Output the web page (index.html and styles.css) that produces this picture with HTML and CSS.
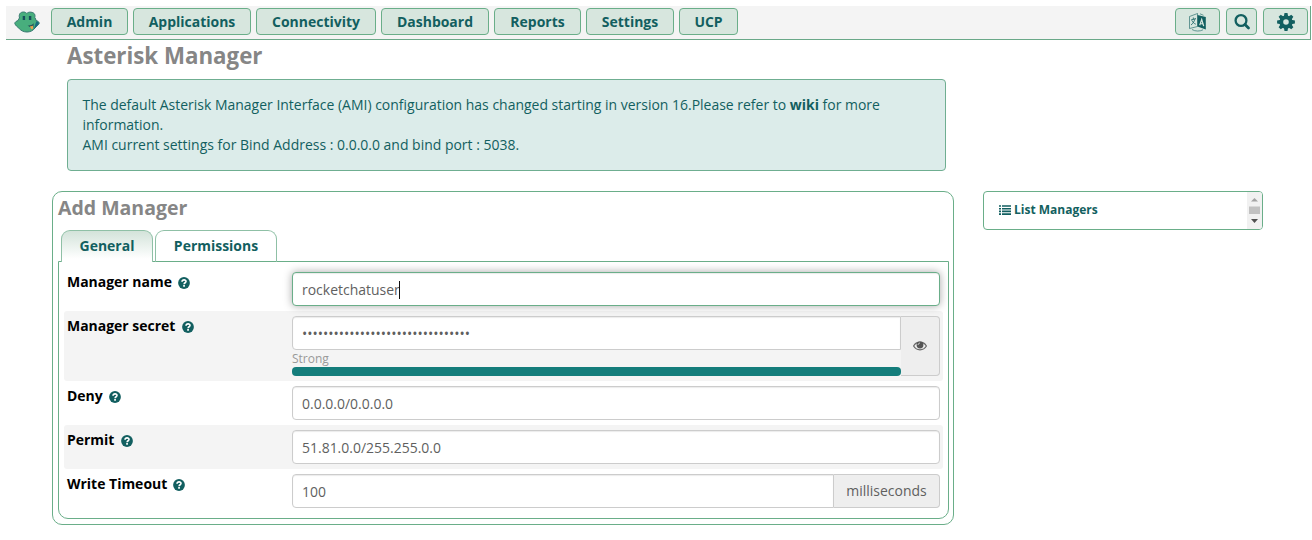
FILE: index.html
```html
<!DOCTYPE html>
<html lang="en">
<head>
<meta charset="utf-8">
<title>Asterisk Manager</title>
<link rel="stylesheet" href="styles.css">
</head>
<body>
<svg width="0" height="0" class="defs">
  <symbol id="help" viewBox="0 0 12 12"><circle cx="6" cy="6" r="5.9" fill="#125f60"/><path d="M4 4.700C4.200 2.300 8.200 2.400 8 4.500 7.900 5.800 6.100 5.700 6.100 7.200" fill="none" stroke="#fff" stroke-width="1.600"/><path d="M5.200 8.100h1.700v1.600H5.200z" fill="#fff"/></symbol>
</svg>
<header class="topbar">
  <svg class="logo" viewBox="0 0 26 22">
    <path d="M5.500 7 C4.500 3 6.500 1 9.500 1 C11 1 12 1.700 12.800 2.500 C14 1.200 15.500 1 17 1.200 C20.500 1.500 21.500 4 20.800 6.500 C21.500 7.500 21.900 8.500 22 9.500 C24 10 25.300 11 25.200 12.500 C24 14.500 22.500 15.200 21 17 C19 19.800 16 21 13 21 C9.500 21 7 19.500 5.200 17.500 C3.500 16 1.500 14.500 .8 12.500 C.8 11 2.500 10 4.200 9.500 C4.400 8.500 4.800 7.700 5.500 7 Z" fill="#48ae7d" stroke="#35776f" stroke-width="1"/>
    <path d="M22.500 10.300 C24 10.400 25 11.400 24.800 12.500 C24 14.300 22.500 15 21 17 C20.500 17.600 20 18 19.500 18.400 C21 16 21 13 22.500 10.300 Z" fill="#176c80"/>
    <path d="M9.900 5V9M16.100 5V9" stroke="#174f5c" stroke-width="2.400"/>
    <path d="M13.500 14.500C16 14.800 18 14 19.800 12.300L19.300 16.500C17 16.800 15.200 16 14.200 14.800Z" fill="#28525a"/>
    <path d="M15.800 15.600L19 14.700V17.800L17.400 18.200Z" fill="#e4a451"/>
  </svg>
  <nav class="menu">
    <a class="btn w-admin">Admin</a><a class="btn w-apps">Applications</a><a class="btn w-conn">Connectivity</a><a class="btn w-dash">Dashboard</a><a class="btn w-rep">Reports</a><a class="btn w-set">Settings</a><a class="btn w-ucp">UCP</a>
  </nav>
  <div class="tools">
    <a class="btn w-lang"><svg width="20" height="20" viewBox="0 0 20 20" fill="none" stroke="#125f60"><path d="M1.500 4.500L9.500 1.500v13l-8 2z" stroke-width=".6"/><path d="M9.500 3l8.300 2v12.500l-8.300-3z" fill="#125f60" stroke="none"/><path d="M3 8l5-1.500M5.300 5.500v2M7 7c-.8 2.500-2 4.500-4 6M4 8.500c1 2 2 3 3.800 3.700" stroke-width=".8"/><path d="M11.700 13.200l2-5.700 2 6.700M12.300 11.500l2.700.5" stroke="#d7e6de" stroke-width="1.200"/><path d="M4 17.500c3 2 8 2 11 .3M12 1.800l3.500 1.500" stroke-width=".6"/></svg></a>
    <a class="btn w-search"><svg width="18" height="18" viewBox="0 0 18 18" fill="none" stroke="#125f60"><circle cx="8" cy="7.500" r="5.400" stroke-width="2.300"/><path d="M12 11.500l3.500 3.500" stroke-width="2.800" stroke-linecap="round"/></svg></a>
    <a class="btn w-gear"><svg width="18" height="18" viewBox="-9 -9 18 18"><g fill="#125f60"><path id="tooth" d="M-1.500-8.900h3l.8 4h-4.600z"/><use href="#tooth" transform="rotate(45)"/><use href="#tooth" transform="rotate(90)"/><use href="#tooth" transform="rotate(135)"/><use href="#tooth" transform="rotate(180)"/><use href="#tooth" transform="rotate(225)"/><use href="#tooth" transform="rotate(270)"/><use href="#tooth" transform="rotate(315)"/></g><circle r="4.700" fill="none" stroke="#125f60" stroke-width="3.800"/></svg></a>
  </div>
</header>
<main class="page">
  <section class="main-col">
    <h1>Asterisk Manager</h1>
    <div class="notice">The default Asterisk Manager Interface (AMI) configuration has changed starting in version 16.Please refer to <b>wiki</b> for more<br>information.<br>AMI current settings for Bind Address : 0.0.0.0 and bind port : 5038.</div>
    <div class="panel">
      <h2>Add Manager</h2>
      <div class="tabs"><a class="tab active">General</a><a class="tab perm">Permissions</a></div>
      <form class="fields">
        <div class="row"><label>Manager name <svg class="help"><use href="#help"/></svg></label><div class="input focus">rocketchatuser<i class="caret"></i></div></div>
        <div class="row shade secret"><label>Manager secret <svg class="help"><use href="#help"/></svg></label>
          <div class="group"><div class="stack"><div class="input left dots">••••••••••••••••••••••••••••••••</div><span class="strength">Strong</span><div class="bar"></div></div>
          <div class="addon eye"><svg width="14" height="12" viewBox="0 0 14 12"><path d="M.6 6C3.500.9 10.500.9 13.400 6 10.500 11.100 3.500 11.100.6 6z" fill="none" stroke="#666" stroke-width="1.200"/><circle cx="7" cy="5" r="3.400" fill="#555"/><path d="M5.100 5c0-1.200.8-1.900 1.900-1.900" fill="none" stroke="#eee" stroke-width=".8"/></svg></div></div></div>
        <div class="row"><label>Deny <svg class="help"><use href="#help"/></svg></label><div class="input">0.0.0.0/0.0.0.0</div></div>
        <div class="row shade"><label>Permit <svg class="help"><use href="#help"/></svg></label><div class="input">51.81.0.0/255.255.0.0</div></div>
        <div class="row"><label>Write Timeout <svg class="help"><use href="#help"/></svg></label><div class="group"><div class="input left">100</div><div class="addon ms">milliseconds</div></div></div>
      </form>
    </div>
  </section>
  <aside class="side">
    <a class="list"><svg width="12" height="10" viewBox="0 0 12 10" stroke="#125f60" stroke-width="1.600"><path d="M0 1h2M3 1h9M0 3.700h2M3 3.700h9M0 6.400h2M3 6.400h9M0 9.100h2M3 9.100h9"/></svg><span>List Managers</span></a>
    <div class="scroll"><svg width="15" height="36" viewBox="0 0 15 36"><path d="M4 9.500h7L7.500 6z" fill="#a3a3a3"/><path d="M2 14.500h11v7.500H2z" fill="#c1c1c1"/><path d="M4 27h7l-3.500 4z" fill="#505050"/></svg></div>
  </aside>
</main>
</body>
</html>
```
FILE: styles.css
```css
* { box-sizing: border-box; }
body { margin: 0; padding: 6px 1px 0 6px; height: 540px; overflow: hidden; background: #fff; font: 13.97px/20px "Open Sans", "Noto Sans", sans-serif; color: #5f5f5f; }
.defs { display: block; }
.topbar { display: flex; height: 34px; background: #f4f4f4; border-bottom: 1px solid #6aa888; border-right: 1px solid #6aa888; padding: 2px 2px 0 8px; }
.logo { width: 26px; height: 22px; margin: 3px 11px 0 0; }
.menu { display: flex; gap: 5px; }
.tools { display: flex; gap: 6px; margin-left: auto; }
.btn { display: flex; align-items: center; justify-content: center; height: 27px; border: 1px solid #6aae89; border-radius: 4px; background: #d7e6de; color: #125f60; font-weight: 700; white-space: nowrap; }
.w-admin { width: 77px; }
.w-apps { width: 118px; }
.w-conn { width: 120px; }
.w-dash { width: 108px; }
.w-rep { width: 87px; }
.w-set { width: 88px; }
.w-ucp { width: 59px; }
.w-lang { width: 45px; }
.w-search { width: 31px; }
.w-gear { width: 45px; }
.page { display: flex; align-items: flex-start; }
.main-col { width: 902px; margin-left: 46px; }
h1, h2 { margin: 0; color: #868686; font-weight: 700; white-space: nowrap; }
h1 { font-size: 22.3px; line-height: 30px; margin: 1px 0 8px 15px; }
.notice { width: 879px; height: 92px; margin-left: 15px; padding: 15px 14.500px; border: 1px solid #6fae91; border-radius: 4px; background: #dcecea; color: #125f60; white-space: nowrap; }
.panel { height: 334px; margin-top: 20px; border: 1px solid #6aae89; border-radius: 10px; padding: 2px 4px 5px 5px; }
h2 { font-size: 19.5px; line-height: 27px; }
.tabs { display: flex; gap: 2px; height: 32px; margin: 9px 0 -1px 3px; }
.tab { display: flex; align-items: center; justify-content: center; width: 92px; border: 1px solid #8fc0a6; border-bottom: 0; border-radius: 9px 9px 0 0; color: #125f60; font-weight: 700; padding-bottom: 1px; }
.tab.active { background: linear-gradient(#d3e3da, #fff 90%); z-index: 1; }
.tab.perm { width: 122px; }
.fields { height: 258px; border: 1px solid #6aae89; border-radius: 0 0 10px 10px; padding: 5px; }
.row { display: flex; justify-content: space-between; height: 44px; padding: 5px 3px 0 3px; border-radius: 3px; }
.row.secret { height: 70px; }
.shade { background: #f4f4f4; }
label { color: #000; font-weight: 700; white-space: nowrap; }
.help { width: 12px; height: 12px; margin-left: 2.5px; vertical-align: -1.5px; }
.input { width: 648px; height: 34px; border: 1px solid #ccc; border-radius: 4px; background: #fff; padding: 7px 9px; box-shadow: inset 0 1px 1px rgba(0,0,0,.08); white-space: nowrap; }
.focus { border-color: #6aae89; box-shadow: 0 0 8px rgba(0,0,0,.35), inset 0 1px 1px rgba(0,0,0,.08); }
.caret { display: inline-block; width: 1px; height: 18px; margin-left: -1px; background: #111; vertical-align: -4px; }
.group { display: flex; width: 648px; }
.input.left { width: 100%; border-radius: 4px 0 0 4px; }
.stack { width: 609px; }
.strength { display: block; height: 17px; font-size: 12px; line-height: 17px; color: #999; }
.bar { height: 9px; border-radius: 4px; background: #147d7b; }
.addon { display: flex; align-items: center; justify-content: center; border: 1px solid #ccc; border-left: 0; border-radius: 0 4px 4px 0; background: #eee; }
.eye { width: 39px; height: 60px; }
.ms { width: 106px; height: 34px; flex: none; }
.side { display: flex; justify-content: space-between; width: 280px; height: 39px; margin: 151px 0 0 29px; border: 1px solid #6aae89; border-radius: 4px; overflow: hidden; }
.list { display: flex; align-items: center; gap: 3px; padding: 0 0 1px 15px; color: #125f60; font-size: 12px; font-weight: 700; }
.scroll { width: 15px; background: #f1f1f1; }
```
